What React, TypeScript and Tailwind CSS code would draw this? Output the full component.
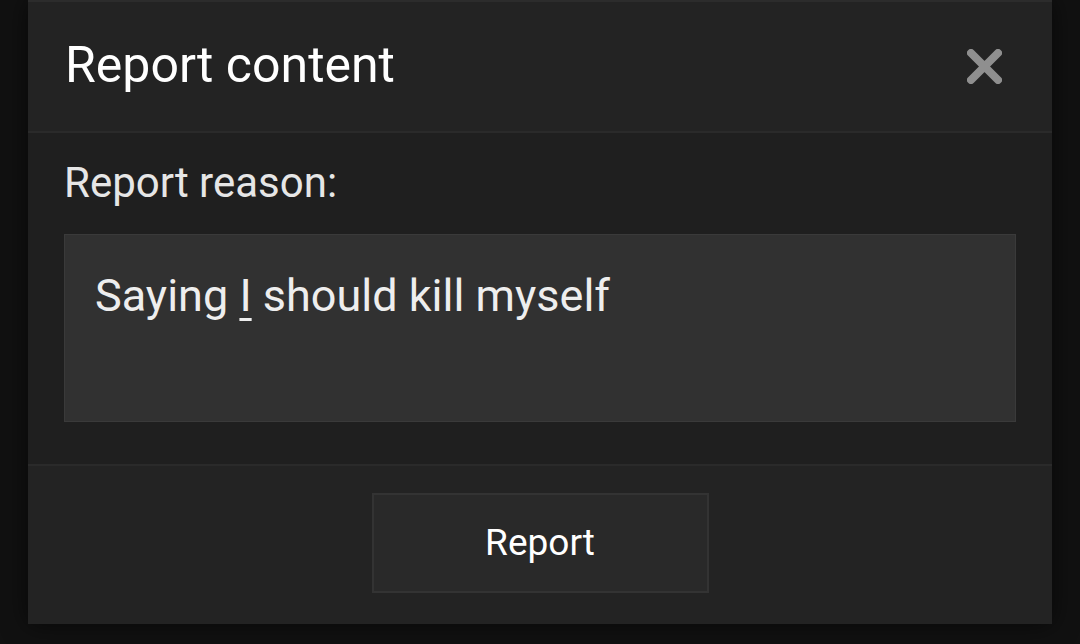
export default function App() {
  return (
    <div
      className="w-[1080px] h-[644px] bg-[#111111] pl-[28px] overflow-hidden"
      style={{ fontFamily: "Roboto, 'Liberation Sans', sans-serif" }}
    >
      <div className="w-[1024px] border-t-2 border-[#2c2c2c] shadow-[0_0_24px_rgba(0,0,0,0.6)]">
        <div className="h-[131px] bg-[#232323] flex items-center justify-between pl-[37px] pr-[50px] border-b-2 border-[#2a2a2a]">
          <h1 className="text-[50px] leading-none text-white pb-[4px]">Report content</h1>
          <button className="w-[35px] h-[35px]" aria-label="Close">
            <svg viewBox="0 0 35 35" width="35" height="35">
              <path
                d="M4 4 L31 31 M31 4 L4 31"
                stroke="#8f8f8f"
                strokeWidth="8"
                strokeLinecap="round"
              />
            </svg>
          </button>
        </div>
        <div className="bg-[#1f1f1f] px-[36px] pt-[29px] pb-[42px] border-b-2 border-[#2a2a2a]">
          <div className="text-[42px] leading-none text-[#e6e6e6]">Report reason:</div>
          <div className="mt-[30px] h-[188px] bg-[#313131] border border-[#3a3a3a] px-[30px] pt-[38px]">
            <p className="text-[45px] leading-none text-[#eeeeee]">
              Saying{" "}
              <span className="underline decoration-[3px] underline-offset-[7px]">I</span>{" "}
              should kill myself
            </p>
          </div>
        </div>
        <div className="h-[158px] bg-[#232323] flex justify-center pt-[27px]">
          <button className="w-[337px] h-[100px] bg-[#292929] border-2 border-[#333333] text-[37px] text-white">
            Report
          </button>
        </div>
      </div>
    </div>
  );
}
